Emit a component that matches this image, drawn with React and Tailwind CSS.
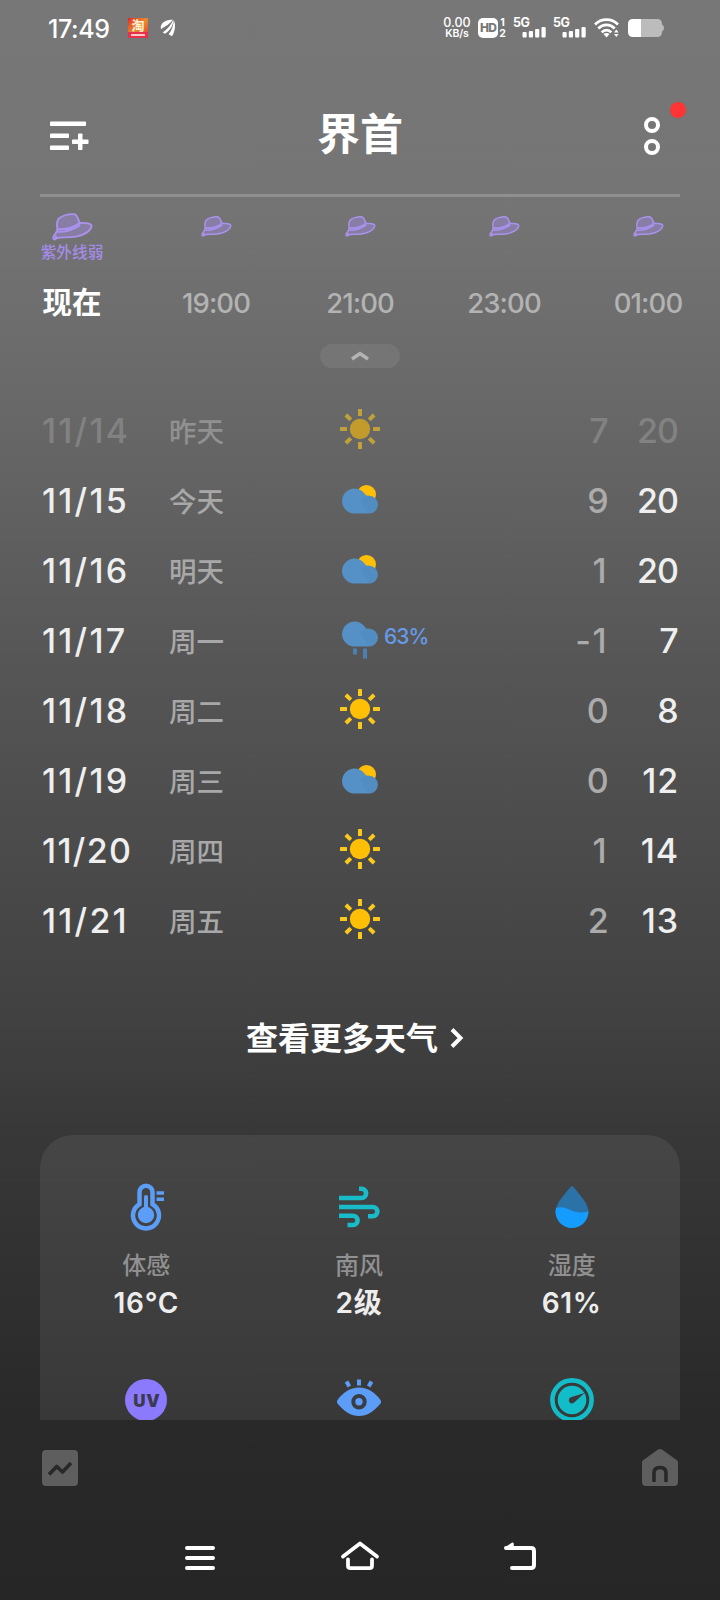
import React from "react";

const cx = (...parts) => parts.filter(Boolean).join(" ");

function SignalBars() {
  return (
    <div className="relative h-[20px] w-[33px]">
      <span className="absolute left-0 top-0 text-[12.5px] leading-[10px] font-bold tracking-[-0.4px]">5G</span>
      <svg className="absolute right-0 bottom-0" width="24" height="12" viewBox="0 0 24 12" fill="#fff">
        <rect x="0.5" y="6" width="4.2" height="5.500" rx="1" />
        <rect x="6.800" y="5" width="4.200" height="6.500" rx="1" />
        <rect x="13.100" y="3" width="4.200" height="8.500" rx="1" />
        <rect x="19.500" y="1" width="4.200" height="10.500" rx="1" />
      </svg>
    </div>
  );
}

function StatusBar() {
  return (
    <div className="flex h-14 items-center pl-12 pr-[56px] text-white">
      <div className="w-[63px] whitespace-nowrap pt-[2px] text-[25px] leading-[28px] font-medium tracking-[-0.4px]">17:49</div>
      <div className="ml-[17px] flex h-5 w-5 flex-col items-center overflow-hidden bg-gradient-to-br from-[#e01b2c] via-[#e98a2c] to-[#e3202f] text-[#fff3d8]">
        <span className="text-[13px] leading-[14px] font-bold">淘</span>
        <span className="flex h-[6px] w-full items-center justify-center bg-[#e8304a]">
          <span className="h-[2px] w-[14px] bg-[#ffc8c8]" />
        </span>
      </div>
      <svg className="ml-[12px]" width="17" height="18" viewBox="0 0 17 18" fill="#fff">
        <path d="M0.800 7C2.500 2.500 7 0.800 13 0.800C10 4.800 5.500 7.500 0.800 10.200Z" />
        <path d="M2.800 13.500C7.500 10.200 10.800 6 13.300 1C13.300 6.500 10 11.500 5 14.800Z" />
        <path d="M8.600 15.200C12.200 11 13.200 6 13.800 1C15.800 5 15.500 12 12 17.200Z" />
      </svg>
      <div className="ml-auto flex items-center">
        <div className="flex w-[28px] flex-col items-center whitespace-nowrap">
          <span className="text-[12.5px] leading-[10px] font-medium">0.00</span>
          <span className="text-[10.500px] leading-[11px] font-semibold tracking-[-0.2px]">KB/s</span>
        </div>
        <div className="ml-[7px] flex h-5 w-5 items-center justify-center rounded-[5px] bg-white text-[12px] font-extrabold tracking-[-0.8px] text-[#777777]">HD</div>
        <div className="ml-[1px] flex w-[7px] flex-col items-center text-[10.500px] leading-[11px] font-bold">
          <span>1</span>
          <span>2</span>
        </div>
        <div className="ml-[7px]"><SignalBars /></div>
        <div className="ml-[7px]"><SignalBars /></div>
        <svg className="ml-[8px]" width="25" height="20" viewBox="0 0 25 20" fill="none" stroke="#fff" strokeWidth="2.700">
          <path d="M1 6.500C7.500 0 17.500 0 24 6.500" />
          <path d="M4.300 10.500C9 5.700 16 5.700 20.700 10.500" />
          <path d="M7.700 14.300C10.500 11.300 14.500 11.300 17.300 14.300" />
          <path d="M9.500 16L12.500 19.500L15.500 16C13.800 14.800 11.200 14.800 9.500 16Z" fill="#fff" stroke="none" />
          <path d="M20 14.500L22.300 11.500L24.600 14.500ZM20 16L22.300 19L24.600 16Z" fill="#fff" stroke="none" />
        </svg>
        <svg className="ml-[9px]" width="36" height="18" viewBox="0 0 36 18">
          <path d="M13 0H29Q34 0 34 5V5.500Q36 6 36 9T34 12.500V13Q34 18 29 18H13Z" fill="#bcbcbc" />
          <path d="M13 0H5Q0 0 0 5V13Q0 18 5 18H13Z" fill="#fff" />
        </svg>
      </div>
    </div>
  );
}

function Header() {
  return (
    <div className="grid h-[138px] grid-cols-[130px_1fr_130px]">
      <div className="pl-[50px] pt-[65px]">
        <svg width="40" height="30" viewBox="0 0 40 30" fill="#fff">
          <rect x="0" y="0.500" width="36" height="4.500" rx="0.800" />
          <rect x="0" y="12.500" width="19" height="4.500" rx="0.800" />
          <rect x="0" y="24.500" width="19" height="4.500" rx="0.800" />
          <rect x="22" y="18.500" width="16.500" height="4.500" rx="0.800" />
          <rect x="28" y="12.500" width="4.500" height="16.500" rx="0.800" />
        </svg>
      </div>
      <h1 className="pt-[48px] text-center text-[43px] leading-[60px] font-bold text-white">界首</h1>
      <div className="pl-[54px] pt-[46px]">
        <svg width="46" height="54" viewBox="0 0 46 54" fill="none">
          <circle cx="8" cy="23" r="6" stroke="#fff" strokeWidth="4" />
          <circle cx="8" cy="45" r="6" stroke="#fff" strokeWidth="4" />
          <circle cx="34" cy="8" r="8" fill="#ff3435" />
        </svg>
      </div>
    </div>
  );
}

function Hat({ className, stroke }) {
  return (
    <svg className={className} viewBox="0 0 42 29" fill="#a78cf0" fillOpacity="0.4" stroke="#aa92ec" strokeWidth={stroke} strokeLinejoin="round">
      <path d="M5.500 16.500C4.500 13 4.800 9 6.500 6C11 2.500 17 1 22.500 1.200C26.500 1.500 25.500 5 28.500 10C22 15.500 13 17.500 5.500 16.500Z" />
      <path d="M5.500 16.500C13 17.500 22 15 28.500 10.500C35 9.800 40.500 11 40.800 13.500C40 18.500 33 23 24.500 24.500C16 26 10 24.500 5 26C2.500 28.500 0.800 27.500 1.200 25C2 22 5 21 5.500 16.500Z" />
      <path d="M5.500 19.500C13 20 22 17 29 12.500" fill="none" />
      <path d="M2.500 26L5 24.500" strokeWidth="3" />
    </svg>
  );
}

function Hourly() {
  const hours = ["19:00", "21:00", "23:00", "01:00"];
  return (
    <div className="grid h-[147px] grid-cols-5">
      <div className="flex flex-col items-center">
        <Hat className="mt-[16px] h-[28px] w-[41px]" stroke="2" />
        <span className="mt-[1px] text-[15.700px] leading-[22px] font-medium text-[#a58be8]">紫外线弱</span>
        <span className="mt-[18px] text-[29.500px] leading-[40px] font-bold text-white">现在</span>
      </div>
      {hours.map((h) => (
        <div key={h} className="flex flex-col items-center">
          <Hat className="mt-[19px] h-[21px] w-[31px]" stroke="2.1" />
          <span className="mt-[46px] text-[27.500px] leading-[40px] font-medium tracking-[-0.9px] text-[#b3b3b3]">{h}</span>
        </div>
      ))}
    </div>
  );
}

function Sun({ dim }) {
  return (
    <svg className={cx("-mt-[2px]", dim && "opacity-60")} width="40" height="40" viewBox="0 0 40 40">
      <circle cx="20" cy="20" r="10.200" fill="#ffbf06" />
      <g fill="#fbc81c">
        {[0, 45, 90, 135, 180, 225, 270, 315].map((a) => (
          <rect key={a} x="18" y="0" width="4" height="7" rx="0.500" transform={`rotate(${a} 20 20)`} />
        ))}
      </g>
    </svg>
  );
}

function CloudShape() {
  return (
    <>
      <path d="M12.500 28.500A12.500 12.500 0 1 1 22.500 8.500Q24.300 10.500 24.600 10.700H27A8.900 8.900 0 0 1 27 28.500Z" fill="#5590c6" />
      <path d="M18.500 15.500A9 9 0 1 1 27 28.500Z" fill="#5089be" opacity="0.5" />
    </>
  );
}

function PartlyCloudy() {
  return (
    <svg className="-mt-[1px]" width="36" height="29" viewBox="0 0 36 29">
      <circle cx="24.500" cy="9.500" r="9.500" fill="#ffbf06" />
      <CloudShape />
    </svg>
  );
}

function Rain() {
  return (
    <svg className="-mt-[1px]" width="36" height="38" viewBox="0 3 36 38">
      <CloudShape />
      <rect x="11" y="30.500" width="4" height="6" fill="#4b80b2" />
      <rect x="21" y="30.500" width="4" height="10" fill="#4b80b2" />
    </svg>
  );
}

const days = [
  { date: "11/14", name: "昨天", icon: "sun", low: "7", high: "20", past: true },
  { date: "11/15", name: "今天", icon: "cloud", low: "9", high: "20" },
  { date: "11/16", name: "明天", icon: "cloud", low: "1", high: "20" },
  { date: "11/17", name: "周一", icon: "rain", low: "-1", high: "7", chance: "63%" },
  { date: "11/18", name: "周二", icon: "sun", low: "0", high: "8" },
  { date: "11/19", name: "周三", icon: "cloud", low: "0", high: "12" },
  { date: "11/20", name: "周四", icon: "sun", low: "1", high: "14" },
  { date: "11/21", name: "周五", icon: "sun", low: "2", high: "13" },
];

function spacing(value) {
  if (value === "1" || value === "-1") return "tracking-[1.500px]";
  if (value.length === 1) return "tracking-[-0.6px]";
  return value.includes("1") ? "tracking-[0.9px] -mr-[1px]" : "tracking-[-0.9px]";
}

function DayRow({ day }) {
  return (
    <div className="grid h-[70px] grid-cols-[127px_171px_40px_1fr_80px_70px] items-center text-[34px] font-medium">
      <span
        className={cx(
          "whitespace-nowrap",
          day.date === "11/20" ? "tracking-[1.300px]" : "tracking-[2.200px]",
          day.past ? "text-[#828282]" : "text-[#efefef]"
        )}
      >
        {day.date}
      </span>
      <span className={cx("pt-[5px] text-[27.500px]", day.past ? "text-[#919191]" : "text-[#a8a8a8]")}>{day.name}</span>
      <span className="flex items-center justify-center">
        {day.icon === "sun" && <Sun dim={day.past} />}
        {day.icon === "cloud" && <PartlyCloudy />}
        {day.icon === "rain" && <Rain />}
      </span>
      <span className="-mt-[7px] pl-[4px] text-[21px] tracking-[-0.9px] text-[#659be9]">{day.chance}</span>
      <span className={cx("text-right", spacing(day.low), day.past ? "text-[#828282]" : "text-[#ababab]")}>{day.low}</span>
      <span className={cx("text-right", spacing(day.high), day.past ? "text-[#828282]" : "text-[#efefef]")}>{day.high}</span>
    </div>
  );
}

function Metric({ icon, label, value }) {
  return (
    <div className="flex h-[195px] flex-col items-center">
      <div className="flex h-[48px] items-center justify-center">{icon}</div>
      <span className="mt-[18px] text-[24px] leading-[34px] font-medium text-[#909090]">{label}</span>
      <span className="text-[28px] leading-[40px] font-semibold tracking-[0.700px] text-[#ededed]">{value}</span>
    </div>
  );
}

const Thermometer = () => (
  <svg width="48" height="48" viewBox="0 0 48 48" fill="none" stroke="#5b9df7">
    <path d="M17.500 21.200V9.300A6.500 6.500 0 0 1 30.500 9.300V21.200A13 13 0 1 1 17.500 21.200Z" strokeWidth="4.500" />
    <circle cx="24" cy="32" r="8.200" fill="#5b9df7" stroke="none" />
    <path d="M24 14V30" strokeWidth="4" strokeLinecap="round" />
    <path d="M34.500 10H42M34.500 16.200H42" strokeWidth="3.500" />
  </svg>
);

const Wind = () => (
  <svg width="42" height="42" viewBox="0 0 42 42" fill="none" stroke="#18bcc8" strokeWidth="4.600">
    <path d="M1 12H23.500A4.600 4.600 0 0 0 23.500 2.800H21" />
    <path d="M1 21H34.800A4.600 4.600 0 0 1 34.800 30.200H30" />
    <path d="M1 29.800H15A4.600 4.600 0 0 1 15 39H9.500" />
  </svg>
);

const Drop = () => (
  <svg width="34" height="42" viewBox="0 0 34 42">
    <path d="M15.200 1.200Q17 -0.500 18.800 1.200C25 9 33.500 18 33.500 25.500A16.500 16.500 0 0 1 0.500 25.500C0.500 18 9 9 15.200 1.200Z" fill="#2b72a8" />
    <path d="M1 22C5 20.500 9 21 14 23.500C20 26.500 27 27.500 33.500 25.300A16.500 16.500 0 0 1 0.500 25.500Z" fill="#149cff" />
  </svg>
);

const Uv = () => (
  <div className="flex h-[42px] w-[42px] items-center justify-center rounded-full bg-[#8b7bfc] pl-px pt-[3px] text-[17px] font-black tracking-[0.6px] text-[#3b3a52]">UV</div>
);

const Eye = () => (
  <svg width="44" height="40" viewBox="0 0 44 40">
    <path d="M0.500 21C6 13.500 13 8.500 22 8.500S38 13.500 43.500 21Q44.500 22.500 43.500 24.500C37 32.500 30 37 22 37S7 32.500 0.500 24.500Q-0.500 22.500 0.500 21Z" fill="#5b9df7" />
    <circle cx="22" cy="22.700" r="5.700" fill="#5b9df7" stroke="#3a3d44" strokeWidth="4" />
    <path d="M22 0.500V6.500M9.500 2.500L12.300 7.500M34.500 2.500L31.700 7.500" stroke="#5b9df7" strokeWidth="4" />
  </svg>
);

const Gauge = () => (
  <svg width="44" height="44" viewBox="0 0 44 44">
    <circle cx="22" cy="22" r="19.600" fill="none" stroke="#12bdca" strokeWidth="4.600" />
    <circle cx="22" cy="22" r="14.300" fill="#12bdca" />
    <path d="M34.500 15L24.500 24.300A3.200 3.200 0 1 1 20.800 19.300Z" fill="#3a3a3a" />
  </svg>
);

function Details() {
  return (
    <div className="mx-10 h-[285px] overflow-hidden rounded-t-[33px] bg-white/7">
      <div className="grid grid-cols-3 pr-[2px] pt-[48px]">
        <Metric icon={<Thermometer />} label="体感" value="16°C" />
        <Metric icon={<Wind />} label="南风" value="2级" />
        <Metric icon={<Drop />} label="湿度" value="61%" />
        <div className="flex h-[44px] items-center justify-center"><Uv /></div>
        <div className="flex h-[42px] items-center justify-center"><Eye /></div>
        <div className="flex h-[44px] items-center justify-center"><Gauge /></div>
      </div>
    </div>
  );
}

function TabBar() {
  return (
    <div className="flex h-[66px] items-end justify-between px-[42px]">
      <svg width="36" height="36" viewBox="0 0 36 36">
        <rect width="36" height="36" rx="4" fill="#5e5e5e" />
        <path d="M7 24.500L14.800 16.500L20.500 22L29 13" fill="none" stroke="#282828" strokeWidth="3.600" strokeLinejoin="round" />
      </svg>
      <svg width="36" height="38" viewBox="0 0 36 38">
        <path d="M0 14Q0 13 1.500 12L16 1.500Q18 0.300 20 1.500L34.500 12Q36 13 36 14V34Q36 38 32 38H4Q0 38 0 34Z" fill="#5e5e5e" />
        <path d="M12 34V25Q12 19.500 18 19.500T24 25V34" fill="none" stroke="#282828" strokeWidth="3.600" />
      </svg>
    </div>
  );
}

function NavBar() {
  return (
    <div className="flex h-[114px] items-start justify-center pt-[54px]">
      <svg width="32" height="32" viewBox="0 0 32 32" stroke="#fff" strokeWidth="4" strokeLinecap="round">
        <path d="M3 8H29M3 18H29M3 28H29" />
      </svg>
      <svg className="ml-[124px]" width="40" height="32" viewBox="0 0 40 32" fill="none" stroke="#fff" strokeWidth="3.800" strokeLinecap="round" strokeLinejoin="round">
        <path d="M3 16.500L20 3.500L37 16.500" />
        <path d="M8 19.500V25.500Q8 28.200 10.500 28.200H29.500Q32 28.200 32 25.500V19.500" />
      </svg>
      <svg className="ml-[123px]" width="34" height="32" viewBox="0 0 34 32" fill="none" stroke="#fff" strokeWidth="4" strokeLinecap="round">
        <path d="M3 8H28Q31 8 31 11V25Q31 28 28 28H9" />
        <path d="M3 8L9.500 3.800V8Z" fill="#fff" strokeWidth="2.500" strokeLinejoin="round" />
      </svg>
    </div>
  );
}

export default function App() {
  return (
    <div className="flex h-[1600px] w-[720px] flex-col overflow-hidden bg-[linear-gradient(180deg,#777777_0px,#757575_190px,#6a6a6a_380px,#565656_660px,#414141_1020px,#383838_1130px,#292929_1420px,#262626_1600px)] font-['Inter','Noto_Sans_CJK_SC',sans-serif]">
      <StatusBar />
      <Header />
      <div className="mx-10 h-[3px] bg-[#8f8f8f]" />
      <Hourly />
      <div className="mx-auto flex h-6 w-20 items-center justify-center rounded-full bg-[#757575]">
        <svg width="18" height="10" viewBox="0 0 18 10" fill="none" stroke="#b4b4b4" strokeWidth="3.500">
          <path d="M1 8L9 2.500L17 8" />
        </svg>
      </div>
      <div className="mt-[27px] px-[42px]">
        {days.map((d) => (
          <DayRow key={d.date} day={d} />
        ))}
      </div>
      <div className="flex h-[180px] items-start justify-center pt-[61px] pr-[10px] text-[32px] leading-[46px] font-bold text-white">
        <span>查看更多天气</span>
        <svg className="ml-[12px] mt-[12px]" width="14" height="20" viewBox="0 0 14 20" fill="none" stroke="#fff" strokeWidth="4">
          <path d="M2 1.500L10.500 10L2 18.500" />
        </svg>
      </div>
      <Details />
      <TabBar />
      <NavBar />
    </div>
  );
}
